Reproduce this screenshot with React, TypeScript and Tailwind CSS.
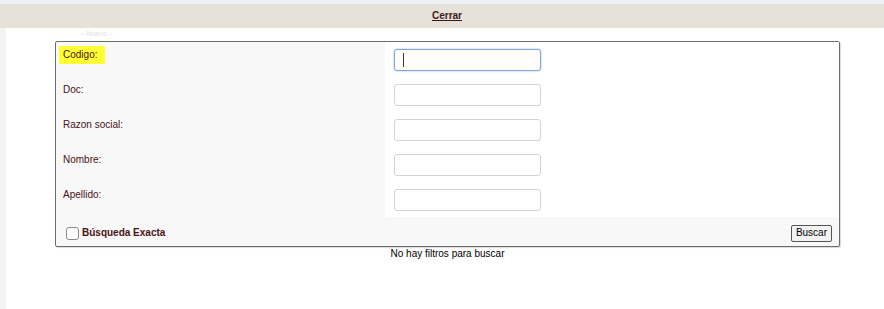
import React from "react";

const campos = ["Codigo:", "Doc:", "Razon social:", "Nombre:", "Apellido:"];

export default function App() {
  return (
    <div className="min-h-[309px] bg-white font-['Liberation_Sans',Arial,sans-serif] text-[10px] leading-[12px]">
      {/* top strip */}
      <div className="h-[4px] bg-[#eef1f1]" />
      <div className="flex h-[24px] items-center justify-center bg-[#e7e2d9]">
        <a className="pl-[10px] font-bold text-[#3a1b1b] underline">Cerrar</a>
      </div>

      <div className="flex min-h-[281px]">
        <div className="w-[6px] shrink-0 bg-[#f3f3f3]" />
        <div className="flex-1">
          <div className="h-[13px] pl-[74px] pt-[2px] text-[7px] leading-[8px] text-[#e2e2e2]">-- Nuevo --</div>

          <div className="ml-[49px] w-[785px] rounded-[2px] border border-[#6c6c6c] bg-[#f8f8f8] shadow-[1px_1px_1px_rgba(0,0,0,0.15)]">
            {campos.map((c, i) => (
              <div key={c} className="flex h-[35px]">
                <div className="w-[329px] pl-[3px] pt-[4px]">
                  <span
                    className={
                      i === 0
                        ? "inline-block h-[18px] bg-[#ffff33] pl-[4px] pr-[8px] leading-[18px] text-[#4a1212]"
                        : "inline-block h-[18px] pl-[4px] pr-[8px] leading-[18px] text-[#4a1212]"
                    }
                  >
                    {c}
                  </span>
                </div>
                <div className="flex flex-1 items-center bg-white pl-[9px]">
                  {i === 0 ? (
                    <div className="relative">
                      <input
                        type="text"
                        className="block h-[22px] w-[147px] rounded-[3px] border border-[#7ea6d8] bg-[#fffefb] shadow-[0_0_2px_rgba(80,140,220,0.6)] outline-none"
                      />
                      <div className="absolute left-[9px] top-[4px] h-[14px] w-px bg-[#333]" />
                    </div>
                  ) : (
                    <input
                      type="text"
                      className="block h-[22px] w-[147px] rounded-[3px] border border-[#d3d3d3] bg-white outline-none"
                    />
                  )}
                </div>
              </div>
            ))}

            <div className="flex h-[29px] items-center justify-between pl-[10px] pr-[7px] pt-[3px]">
              <label className="flex items-center gap-[3px] font-bold text-[#4a1212]">
                <span className="inline-block h-[13px] w-[13px] rounded-[3px] border border-[#8a8a8a] bg-white" />
                Búsqueda Exacta
              </label>
              <button className="h-[17px] rounded-[2px] border border-[#555] bg-[#f2f2f2] px-[4px] text-[10px] leading-[14px] text-black">
                Buscar
              </button>
            </div>
          </div>

          <div className="w-[785px] ml-[49px] pt-[1px] text-center text-black">No hay filtros para buscar</div>
        </div>
      </div>
    </div>
  );
}
